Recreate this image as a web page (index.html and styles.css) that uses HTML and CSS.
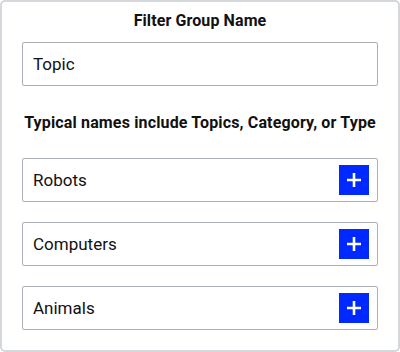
FILE: index.html
```html
<!DOCTYPE html>
<html>
<head>
<meta charset="utf-8">
<link rel="stylesheet" href="styles.css">
</head>
<body>
<div class="panel">
  <div class="title">Filter Group Name</div>
  <div class="field">Topic</div>
  <div class="hint">Typical names include Topics, Category, or Type</div>
  <div class="rows">
    <div class="row"><span class="label">Robots</span><button class="add" aria-label="Add"><svg width="14" height="14" viewBox="0 0 14 14"><path d="M7 0v14M0 7h14" stroke="#fff" stroke-width="2.6"/></svg></button></div>
    <div class="row"><span class="label">Computers</span><button class="add" aria-label="Add"><svg width="14" height="14" viewBox="0 0 14 14"><path d="M7 0v14M0 7h14" stroke="#fff" stroke-width="2.6"/></svg></button></div>
    <div class="row"><span class="label">Animals</span><button class="add" aria-label="Add"><svg width="14" height="14" viewBox="0 0 14 14"><path d="M7 0v14M0 7h14" stroke="#fff" stroke-width="2.6"/></svg></button></div>
  </div>
</div>
</body>
</html>
```
FILE: styles.css
```css
html, body {
  margin: 0;
  padding: 0;
  background: #fff;
}
body {
  font-family: Roboto, "Liberation Sans", sans-serif;
  color: #111;
}
.panel {
  box-sizing: border-box;
  width: 400px;
  height: 352px;
  border: 2px solid #d4d7dc;
  border-radius: 5px;
  padding: 9px 20px 0 20px;
  display: flex;
  flex-direction: column;
}
.title {
  font-size: 16px;
  font-weight: 700;
  line-height: 20px;
  text-align: center;
  letter-spacing: 0.1px;
}
.field {
  box-sizing: border-box;
  margin-top: 11px;
  height: 44px;
  border: 1px solid #a9aeb7;
  border-radius: 2px;
  padding: 0 10px;
  display: flex;
  align-items: center;
  font-size: 17px;
}
.hint {
  margin-top: 27px;
  font-size: 16px;
  font-weight: 700;
  line-height: 20px;
  text-align: center;
  letter-spacing: 0.15px;
  white-space: nowrap;
}
.rows {
  margin-top: 25px;
  display: flex;
  flex-direction: column;
  gap: 20px;
}
.row {
  box-sizing: border-box;
  height: 44px;
  border: 1px solid #a9aeb7;
  border-radius: 2px;
  padding: 0 8px 0 10px;
  display: flex;
  align-items: center;
  justify-content: space-between;
  font-size: 17px;
}
.add {
  width: 30px;
  height: 30px;
  border: 0;
  padding: 0;
  background: #0029ff;
  display: flex;
  align-items: center;
  justify-content: center;
}
.add svg {
  display: block;
}
```
